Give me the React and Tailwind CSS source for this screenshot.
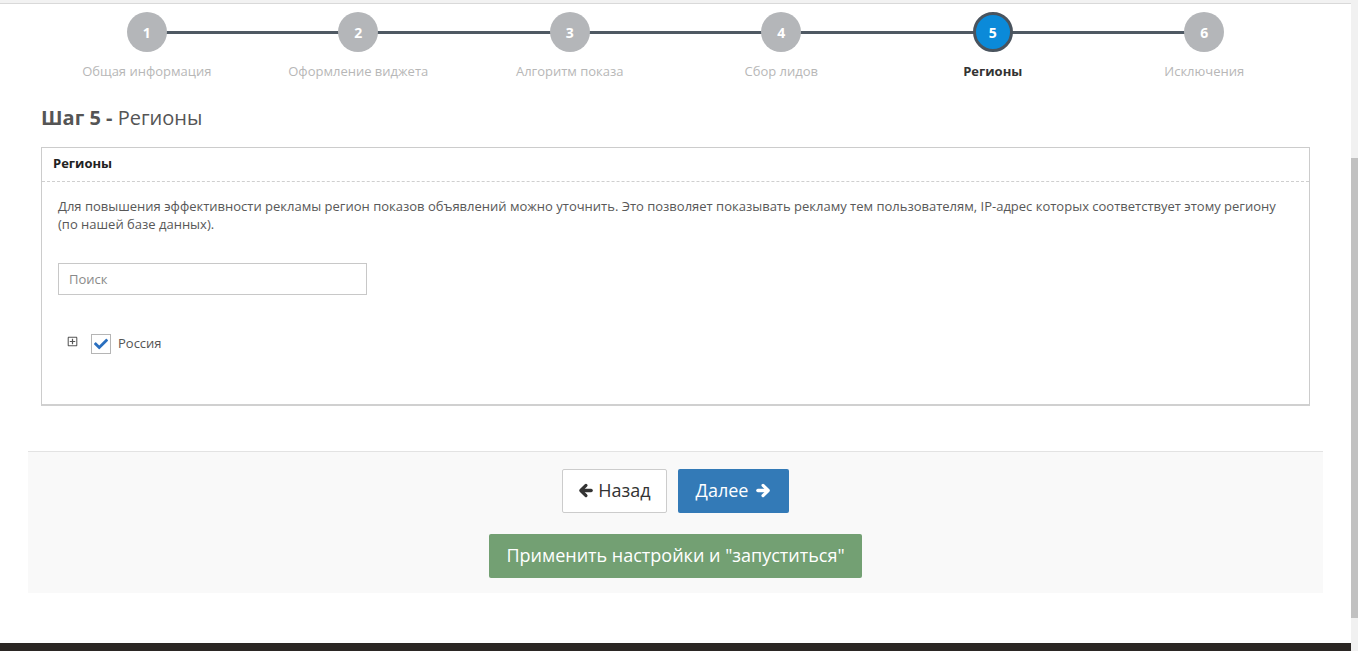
import React from "react";
import { FaCheck, FaRegPlusSquare } from "react-icons/fa";

const steps = [
  "Общая информация",
  "Оформление виджета",
  "Алгоритм показа",
  "Сбор лидов",
  "Регионы",
  "Исключения",
];

const ACTIVE = 4;

// thick arrow like the old font-awesome one
const Arrow = ({ dir }) => (
  <svg
    viewBox="0 0 16 16"
    className={dir === "left" ? "h-[15px] w-[15px]" : "h-[15px] w-[15px] rotate-180"}
    fill="none"
    stroke="currentColor"
  >
    <path d="M8.5 2.5 L3 8 L8.5 13.5" strokeWidth="3.4" strokeLinejoin="round" strokeLinecap="round" />
    <path d="M4 8 H14" strokeWidth="3.6" strokeLinecap="round" />
  </svg>
);

const Stepper = () => (
  <div className="grid grid-cols-6 px-[41px] pt-[8px]">
    {steps.map((label, i) => (
      <div key={label} className="relative flex flex-col items-center">
        {i < steps.length - 1 && (
          <div className="absolute left-1/2 top-[19px] h-[3px] w-full bg-[#4f5963]" />
        )}
        <div
          className={
            i === ACTIVE
              ? "relative z-10 flex h-[40px] w-[40px] items-center justify-center rounded-full border-[3px] border-[#4a545e] bg-[#0b8ad9] text-[14px] font-bold text-white"
              : "relative z-10 flex h-[40px] w-[40px] items-center justify-center rounded-full bg-[#b4b6b9] text-[14px] font-bold text-white"
          }
        >
          {i + 1}
        </div>
        <div
          className={
            i === ACTIVE
              ? "mt-[10px] text-[13px] font-bold text-[#333]"
              : "mt-[10px] text-[13px] text-[#b7b7b7]"
          }
        >
          {label}
        </div>
      </div>
    ))}
  </div>
);

const RegionsPanel = () => (
  <div className="mx-[41px] mt-[16px] border border-[#cccccc] border-b-2 border-b-[#d0d0d0]">
    <div className="border-b border-dashed border-[#cfcfcf] px-[11px] pt-[6px] pb-[8px] text-[13px] font-bold leading-[19px] text-[#222]">
      Регионы
    </div>
    <div className="px-[16px] pt-[15px] pb-[50px]">
      <p className="text-[13px] leading-[18px] text-[#585858]">
        Для повышения эффективности рекламы регион показов объявлений можно уточнить. Это
        позволяет показывать рекламу тем пользователям, IP-адрес которых соответствует этому
        региону (по нашей базе данных).
      </p>
      <input
        type="text"
        placeholder="Поиск"
        className="mt-[30px] h-[32px] w-[309px] border border-[#c8c8c8] px-[10px] text-[13px] text-[#555] placeholder:text-[#8a8a8a] outline-none"
      />
      <div className="mt-[39px] flex items-center pl-[9px]">
        <FaRegPlusSquare className="mb-[4px] text-[11px] text-[#555]" />
        <div className="ml-[13px] flex h-[20px] w-[20px] items-center justify-center border border-[#b5b5b5] bg-white">
          <FaCheck className="text-[14px] text-[#2a6fbf]" />
        </div>
        <span className="ml-[7px] text-[13px] text-[#555]">Россия</span>
      </div>
    </div>
  </div>
);

const Actions = () => (
  <div className="mx-[28px] mt-[45px] border-t border-[#e3e3e3] bg-[#f9f9f9] pt-[17px] pb-[15px]">
    <div className="flex justify-center gap-[11px]">
      <button className="flex h-[44px] w-[105px] items-center justify-center gap-[5px] rounded-[2px] border border-[#cccccc] bg-white text-[18px] text-[#333]">
        <Arrow dir="left" />
        Назад
      </button>
      <button className="flex h-[44px] w-[111px] items-center justify-center gap-[8px] rounded-[2px] bg-[#337ab7] text-[18px] text-white">
        Далее
        <Arrow dir="right" />
      </button>
    </div>
    <div className="mt-[21px] flex justify-center">
      <button className="h-[44px] w-[373px] rounded-[2px] bg-[#73a073] text-[18px] text-white">
        Применить настройки и "запуститься"
      </button>
    </div>
  </div>
);

export default function App() {
  return (
    <div className="flex h-[651px] w-full overflow-hidden bg-white font-['Open_Sans',sans-serif]">
      <div className="flex flex-1 flex-col">
        <div className="h-[4px] border-b border-[#d9d9d9] bg-[#f2f2f2]" />
        <Stepper />
        <h2 className="mx-[41px] mt-[23px] text-[20px] leading-[26px] text-[#555]">
          <span className="font-bold">Шаг 5 -</span> Регионы
        </h2>
        <RegionsPanel />
        <Actions />
        <div className="flex-1" />
        <div className="h-[8px] bg-[#2b2724]" />
      </div>
      {/* fake scrollbar */}
      <div className="flex w-[7px] flex-col bg-[#f1f1f1]">
        <div className="h-[158px]" />
        <div className="h-[460px] bg-[#c1c1c1]" />
      </div>
    </div>
  );
}
